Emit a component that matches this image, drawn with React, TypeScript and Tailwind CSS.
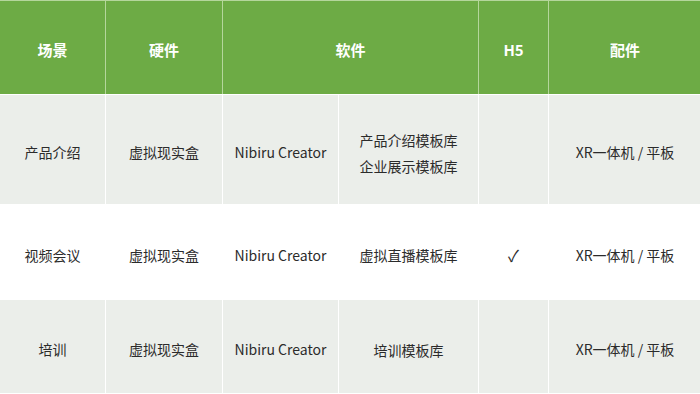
const rows = [
  { h: 'h-[110px]', sw: ['产品介绍模板库', '企业展示模板库'], h5: '', name: '产品介绍', bg: 'bg-[#ebeeea]' },
  { h: 'h-[95px]', sw: ['虚拟直播模板库'], h5: '✓', name: '视频会议', bg: 'bg-white' },
  { h: 'h-[94px]', sw: ['培训模板库'], h5: '', name: '培训', bg: 'bg-[#ebeeea]' },
];

const cols = 'grid-cols-[105px_116px_115px_139px_69px_152px]';
const cell = 'flex items-center justify-center pt-[6px] text-center';

export default function App() {
  return (
    <div
      className="h-[394px] w-[700px] overflow-hidden bg-white text-[14px] text-[#2b2b2b]"
      style={{ fontFamily: '"Noto Sans CJK SC", "Noto Sans", sans-serif' }}
    >
      <div className={`grid h-[94px] ${cols} gap-px bg-[#b5d69c] pt-px text-[15px] font-bold text-white`}>
        <div className={`${cell} bg-[#6dab45]`}>场景</div>
        <div className={`${cell} bg-[#6dab45]`}>硬件</div>
        <div className={`${cell} col-span-2 bg-[#6dab45]`}>软件</div>
        <div className={`${cell} bg-[#6dab45]`}>H5</div>
        <div className={`${cell} bg-[#6dab45]`}>配件</div>
      </div>
      {rows.map(r => (
        <div key={r.name} className={`grid ${r.h} ${cols} gap-px border-t border-white`}>
          <div className={`${cell} ${r.bg}`}>{r.name}</div>
          <div className={`${cell} ${r.bg}`}>虚拟现实盒</div>
          <div className={`${cell} ${r.bg}`}>Nibiru Creator</div>
          <div className={`${cell} ${r.bg} flex-col gap-[6px] leading-[20px]`}>
            {r.sw.map(s => (
              <span key={s}>{s}</span>
            ))}
          </div>
          <div className={`${cell} ${r.bg} text-[16px]`}>{r.h5}</div>
          <div className={`${cell} ${r.bg}`}>XR一体机 / 平板</div>
        </div>
      ))}
    </div>
  );
}
